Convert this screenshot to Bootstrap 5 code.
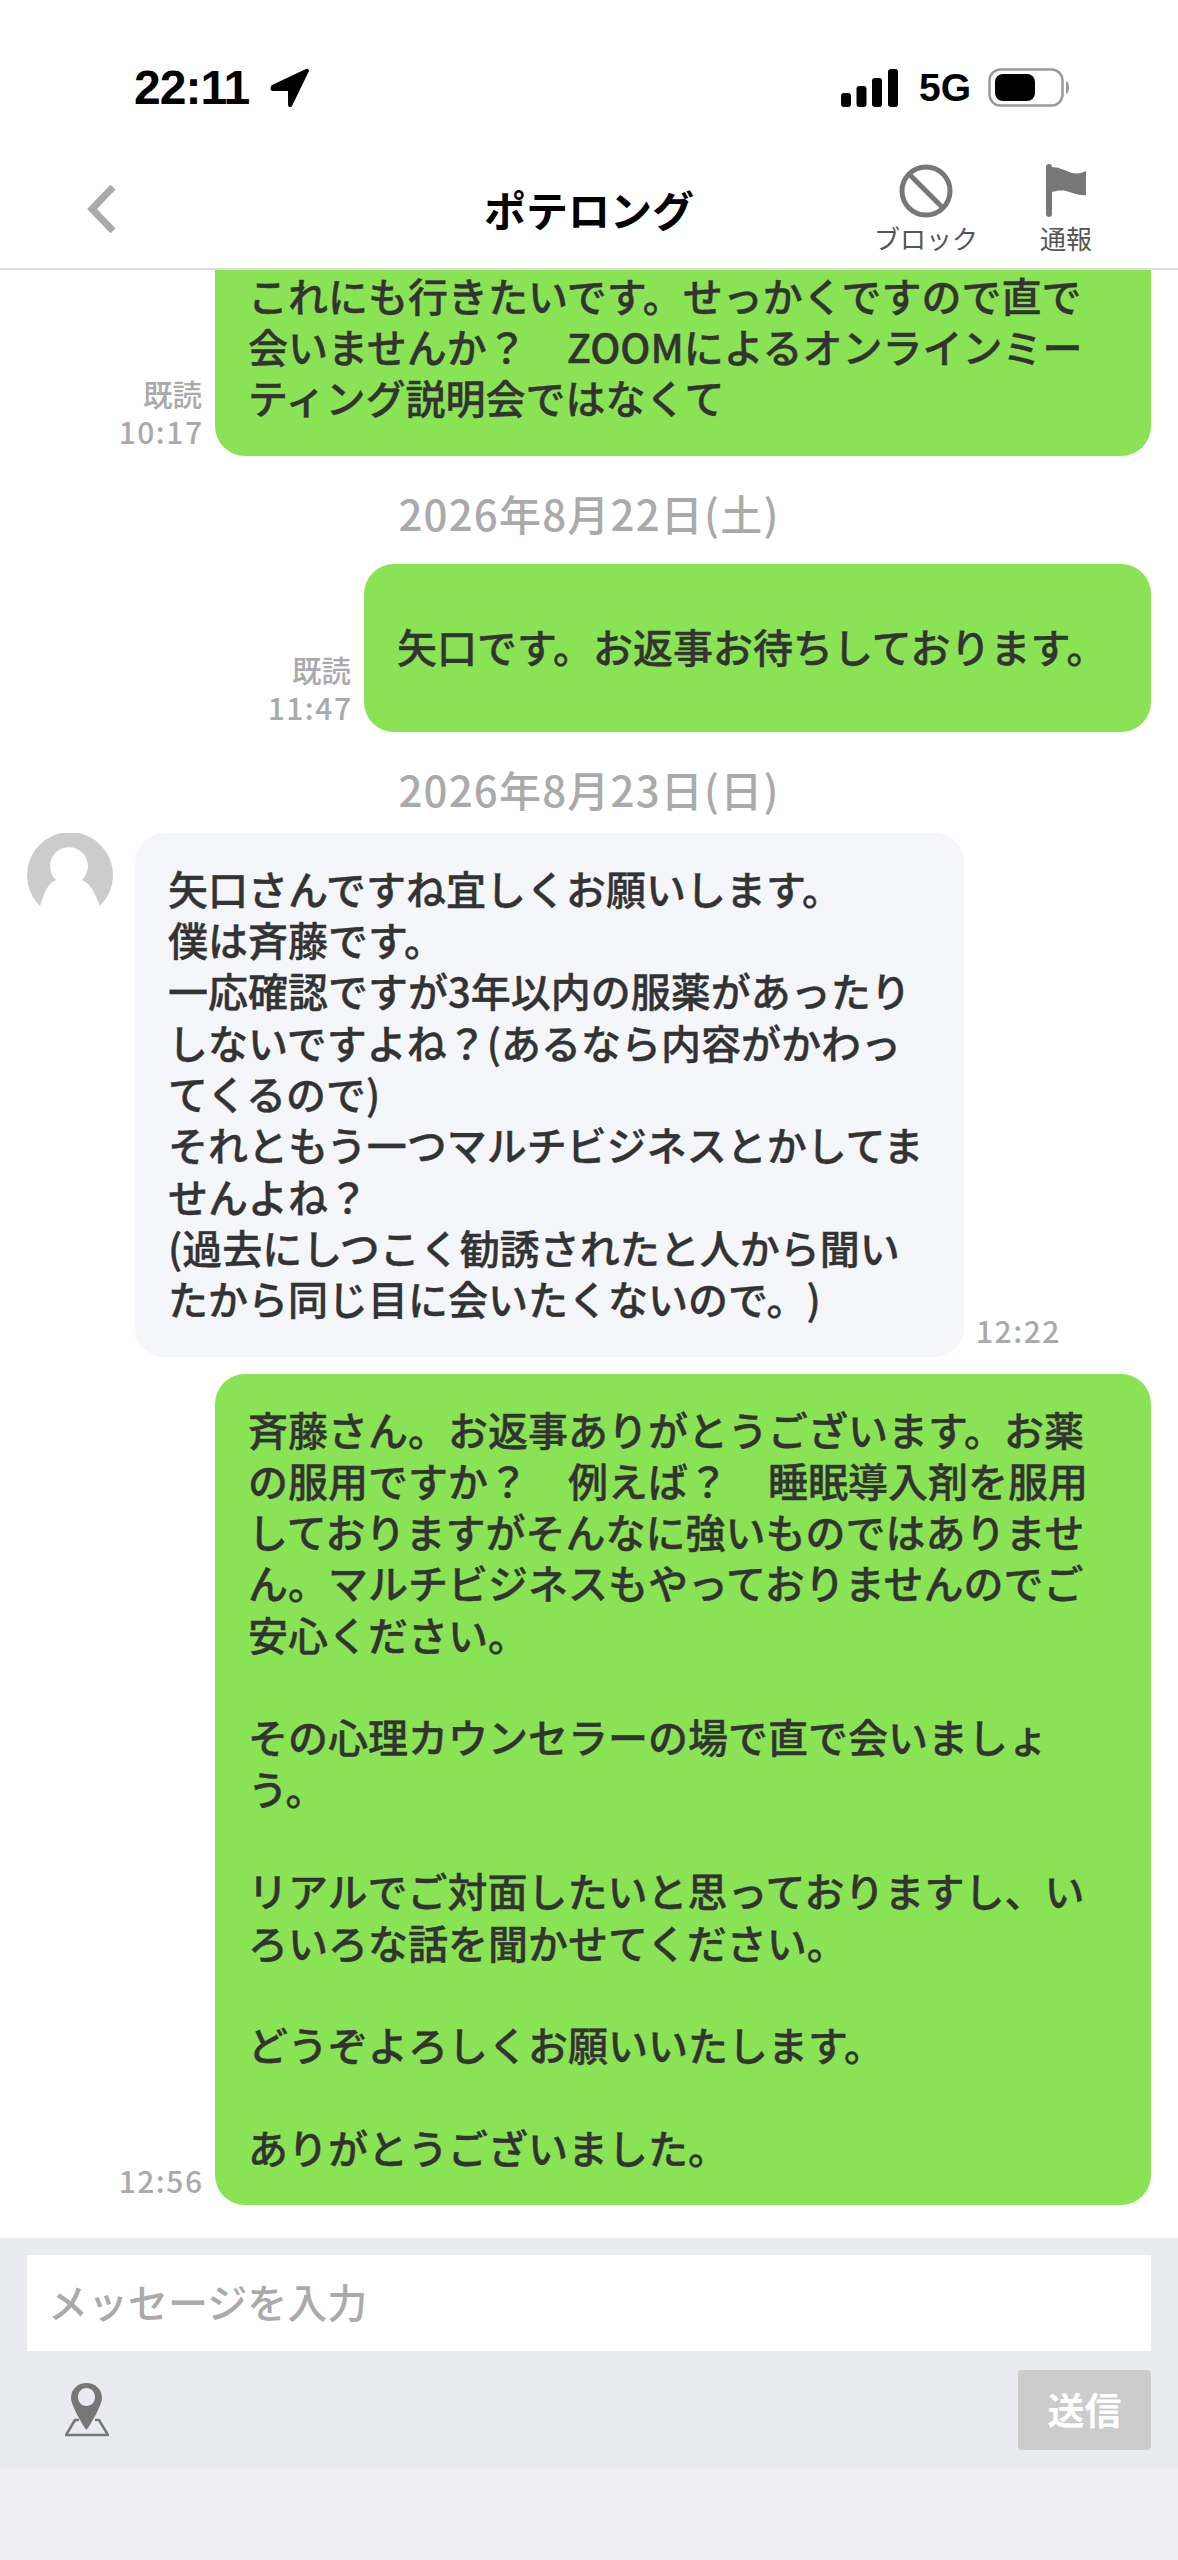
<!DOCTYPE html>
<html lang="ja">
<head>
    <meta charset="UTF-8">
    <meta name="viewport" content="width=device-width, initial-scale=1">
    <title>ポテロング</title>
    <link rel="stylesheet" href="https://cdn.jsdelivr.net/npm/bootstrap@5.3.3/dist/css/bootstrap.min.css">
    <style>
        body {
            font-family: "Noto Sans CJK JP", "Liberation Sans", sans-serif;
            color: #333;
            background: #fff;
            text-spacing-trim: space-all;
        }
        .phone { width: 1178px; height: 2560px; overflow: hidden; }
        .status-bar { height: 150px; padding: 66px 108px 0 134px; }
        .status-time { font-family: "Liberation Sans", sans-serif; font-weight: 700; font-size: 48px; letter-spacing: -1px; line-height: 44px; color: #000; }
        .status-arrow { margin-left: 21px; }
        .status-net { font-family: "Liberation Sans", sans-serif; font-weight: 700; font-size: 39px; line-height: 44px; color: #000; margin: 0 17px 0 21px; }
        .chat-head { height: 120px; border-bottom: 2px solid #ddd; padding: 14px 67px 0 86px; }
        .head-back { margin-top: 21px; }
        .chat-title { font-size: 42px; font-weight: 700; color: #000; line-height: 1; left: 0; right: 0; top: 38px; text-align: center; }
        .head-action { font-size: 26px; line-height: 30px; color: #555; width: 120px; }
        .head-action-flag { width: 90px; margin-left: 35px; }
        .head-label { margin-top: 5px; }
        .chat-log { min-height: 0; padding: 0 27px 33px 27px; }
        .bubble { font-size: 40px; line-height: 51.3px; font-weight: 500; -webkit-text-stroke: 0.4px #333; border-radius: 30px; padding: 30px 33px 32px; white-space: nowrap; }
        .bubble-me { background: #8ae354; }
        .bubble-them { background: #f5f6fa; margin-left: 22px; }
        .bubble-wide { width: 936px; }
        .bubble-short { width: 787px; padding-top: 57px; padding-bottom: 60px; }
        .bubble-them-size { width: 829px; }
        .msg-meta { font-size: 29.500px; line-height: 38px; font-weight: 500; color: #aaa; text-align: right; margin-right: 13px; padding-bottom: 6px; }
        .msg-meta-left { margin: 0 0 0 12px; padding-bottom: 8px; }
        .msg-time { font-size: 30px; letter-spacing: 1.500px; margin-right: -1.500px; }
        .day-label { font-size: 42px; letter-spacing: 1.200px; line-height: 52px; font-weight: 500; color: #aaa; text-align: center; margin-top: 31px; margin-bottom: 25px; }
        .day-label-tight { margin-bottom: 18px; }
        .avatar-round { width: 86px; height: 86px; flex: none; }
        .msg-gap { margin-top: 17px; }
        .input-bar { height: 230px; background: #eaebf0; padding: 17px 27px 18px 27px; }
        .msg-input { height: 96px; background: #fff; color: #aaa; font-size: 40px; font-weight: 500; line-height: 92px; padding-left: 21px; }
        .tool-row { margin-top: 19px; }
        .pin-icon { margin: 13px 0 0 38px; }
        .send-btn { width: 133px; height: 80px; background: #ccc; color: #fff; font-size: 37px; font-weight: 700; line-height: 78px; border-radius: 4px; text-align: center; }
        .home-area { height: 92px; background: #eeeef3; }
    </style>
</head>
<body>
    <div class="phone d-flex flex-column">
        <div class="status-bar d-flex justify-content-between align-items-start flex-shrink-0">
            <div class="d-flex align-items-center">
                <span class="status-time">22:11</span>
                <svg class="status-arrow" width="40" height="40" viewBox="0 0 40 40"><path d="M36 1C38 0 39 2 39 3L22 38c-1 2-4 1-4-1V23H3C0 23 0 19 2 17z" fill="#000"/></svg>
            </div>
            <div class="d-flex align-items-center">
                <svg width="57" height="38" viewBox="0 0 57 38"><rect x="0" y="24" width="10" height="14" rx="3"/><rect x="15.500" y="17" width="10" height="21" rx="3"/><rect x="31" y="9" width="10" height="29" rx="3"/><rect x="47" y="0" width="10" height="38" rx="3"/></svg>
                <span class="status-net">5G</span>
                <svg width="82" height="40" viewBox="0 0 82 40"><rect x="1.500" y="1.500" width="73" height="36" rx="11" fill="none" stroke="#999" stroke-width="2.500"/><rect x="7" y="6" width="40" height="27" rx="8" fill="#000"/><path d="M78 13c4 1 4 12 0 13z" fill="#999"/></svg>
            </div>
        </div>

        <div class="chat-head position-relative d-flex justify-content-between flex-shrink-0">
            <svg class="head-back" width="30" height="48" viewBox="0 0 30 48"><path d="M27 2 6 24l21 22" fill="none" stroke="#aaa" stroke-width="7"/></svg>
            <div class="chat-title position-absolute">ポテロング</div>
            <div class="d-flex">
                <div class="head-action text-center">
                    <svg width="54" height="54" viewBox="0 0 54 54" class="d-block mx-auto"><circle cx="27" cy="27" r="24" fill="none" stroke="#777" stroke-width="5"/><path d="M10 10l34 34" stroke="#777" stroke-width="5"/></svg>
                    <div class="head-label">ブロック</div>
                </div>
                <div class="head-action head-action-flag text-center">
                    <svg width="40" height="54" viewBox="0 0 40 54" class="d-block mx-auto"><path d="M3 0c2 0 3 1 3 3 6 0 12 3 20 6 6 1 10 0 14-2v24c-7 1-12-2-20-4-6-1-10 0-14 1v22c0 4-6 4-6 0V3C0 1 1 0 3 0z" fill="#777"/></svg>
                    <div class="head-label">通報</div>
                </div>
            </div>
        </div>

        <div class="chat-log flex-grow-1 overflow-hidden d-flex flex-column justify-content-end">
            <div class="d-flex justify-content-end align-items-end flex-shrink-0">
                <div class="msg-meta">既読<br><span class="msg-time">10:17</span></div>
                <div class="bubble bubble-me bubble-wide">これにも行きたいです。せっかくですので直で<br>会いませんか？　ZOOMによるオンラインミー<br>ティング説明会ではなくて</div>
            </div>
            <div class="day-label flex-shrink-0">2026年8月22日(土)</div>
            <div class="d-flex justify-content-end align-items-end flex-shrink-0">
                <div class="msg-meta">既読<br><span class="msg-time">11:47</span></div>
                <div class="bubble bubble-me bubble-short">矢口です。お返事お待ちしております。</div>
            </div>
            <div class="day-label day-label-tight flex-shrink-0">2026年8月23日(日)</div>
            <div class="d-flex align-items-end flex-shrink-0">
                <svg class="avatar-round align-self-start" viewBox="0 0 86 86"><path d="M13 73A43 43 0 1 1 73 73C68 60 63 50 55 47A19 19 0 1 0 29 47C21 50 17 60 13 73z" fill="#ccc"/></svg>
                <div class="bubble bubble-them bubble-them-size">矢口さんですね宜しくお願いします。<br>僕は斉藤です。<br>一応確認ですが3年以内の服薬があったり<br>しないですよね？(あるなら内容がかわっ<br>てくるので)<br>それともう一つマルチビジネスとかしてま<br>せんよね？<br>(過去にしつこく勧誘されたと人から聞い<br>たから同じ目に会いたくないので。)</div>
                <div class="msg-meta msg-meta-left"><span class="msg-time">12:22</span></div>
            </div>
            <div class="d-flex justify-content-end align-items-end msg-gap flex-shrink-0">
                <div class="msg-meta"><span class="msg-time">12:56</span></div>
                <div class="bubble bubble-me bubble-wide">斉藤さん。お返事ありがとうございます。お薬<br>の服用ですか？　例えば？　睡眠導入剤を服用<br>しておりますがそんなに強いものではありませ<br>ん。マルチビジネスもやっておりませんのでご<br>安心ください。<br><br>その心理カウンセラーの場で直で会いましょ<br>う。<br><br>リアルでご対面したいと思っておりますし、い<br>ろいろな話を聞かせてください。<br><br>どうぞよろしくお願いいたします。<br><br>ありがとうございました。</div>
            </div>
        </div>

        <div class="input-bar flex-shrink-0">
            <div class="msg-input">メッセージを入力</div>
            <div class="tool-row d-flex justify-content-between">
                <svg class="pin-icon" width="44" height="54" viewBox="0 0 44 54"><path d="M14 37h-4L1 52h42l-9-15h-4" fill="none" stroke="#777" stroke-width="2.500" stroke-linejoin="round"/><path d="M21.500 0C13 0 6 6 6 15c0 7 11 26 15.500 32C26 41 37 22 37 15 37 6 30 0 21.500 0zm0 5c5 0 8.500 4 8.500 9s-3.500 9-8.500 9-8.500-4-8.500-9 3.500-9 8.500-9z" fill="#777"/></svg>
                <div class="send-btn">送信</div>
            </div>
        </div>
        <div class="home-area flex-shrink-0"></div>
    </div>
    <script src="https://cdn.jsdelivr.net/npm/bootstrap@5.3.3/dist/js/bootstrap.bundle.min.js"></script>
</body>
</html>
